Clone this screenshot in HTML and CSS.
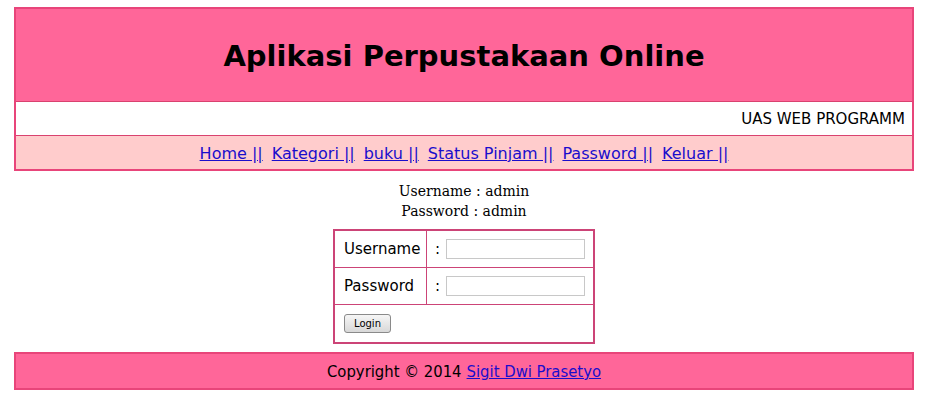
FILE: index.html
```html
<!DOCTYPE html>
<html>
<head>
<meta charset="utf-8">
<title>Aplikasi Perpustakaan Online</title>
<link rel="stylesheet" href="styles.css">
</head>
<body>
<div class="page">
  <div class="top">
    <div class="banner"><h1>Aplikasi Perpustakaan Online</h1></div>
    <div class="sub">UAS WEB PROGRAMM</div>
    <div class="nav">
      <a href="#">Home ||</a>
      <a href="#">Kategori ||</a>
      <a href="#">buku ||</a>
      <a href="#">Status Pinjam ||</a>
      <a href="#">Password ||</a>
      <a href="#">Keluar ||</a>
    </div>
  </div>
  <div class="hint">Username : admin<br>Password : admin</div>
  <form class="login">
    <div class="row">
      <div class="lbl">Username</div>
      <div class="val">: <input type="text" class="field"></div>
    </div>
    <div class="row">
      <div class="lbl">Password</div>
      <div class="val">: <input type="password" class="field"></div>
    </div>
    <div class="row last">
      <button type="button" class="btn">Login</button>
    </div>
  </form>
  <div class="footer">Copyright © 2014 <a href="#">Sigit Dwi Prasetyo</a></div>
</div>
</body>
</html>
```

FILE: styles.css
```css
html, body {
  margin: 0;
  padding: 0;
  background: #ffffff;
}
body {
  font-family: "DejaVu Sans", Verdana, sans-serif;
  color: #000;
}
.page {
  width: 900px;
  margin: 7px 0 0 14px;
  display: flex;
  flex-direction: column;
}
.top {
  border: 2px solid #e8457a;
  display: flex;
  flex-direction: column;
}
.banner {
  background: #ff6699;
  height: 92px;
  display: flex;
  align-items: center;
  justify-content: center;
  border-bottom: 1px solid #d9426f;
}
.banner h1 {
  margin: 0;
  font-size: 29px;
  font-weight: bold;
  position: relative;
  top: 1px;
}
.sub {
  height: 33px;
  display: flex;
  align-items: center;
  justify-content: flex-end;
  padding-right: 7px;
  font-size: 15px;
  border-bottom: 1px solid #d9426f;
}
.nav {
  background: #ffcccc;
  height: 32px;
  padding-top: 1px;
  display: flex;
  align-items: center;
  justify-content: center;
  gap: 9px;
  font-size: 16px;
}
.nav a, .footer a {
  color: #1a0dcc;
}
.hint {
  font-family: "DejaVu Serif", Georgia, serif;
  font-size: 14px;
  line-height: 20px;
  text-align: center;
  margin-top: 10px;
}
.login {
  align-self: center;
  width: 258px;
  margin: 8px 0 0 0;
  border: 2px solid #cc4477;
  display: flex;
  flex-direction: column;
  font-size: 15px;
}
.row {
  display: flex;
  height: 36px;
  border-bottom: 1px solid #cc4477;
}
.row.last {
  border-bottom: none;
  height: 37px;
  align-items: center;
  padding-left: 9px;
}
.lbl {
  width: 82px;
  padding-left: 9px;
  border-right: 1px solid #cc4477;
  display: flex;
  align-items: center;
}
.val {
  flex: 1;
  display: flex;
  align-items: center;
  padding-left: 8px;
  gap: 6px;
}
.field {
  width: 133px;
  height: 14px;
  border: 1px solid #c8c8c8;
  padding: 2px;
  margin: 0;
}
.btn {
  font-family: "DejaVu Sans", Tahoma, sans-serif;
  font-size: 10px;
  width: 47px;
  height: 19px;
  padding: 0;
  border: 1px solid #8a8a8a;
  border-radius: 3px;
  background: linear-gradient(#f6f6f6, #d8d8d8);
  color: #000;
}
.footer {
  margin-top: 8px;
  border: 2px solid #e8457a;
  background: #ff6699;
  height: 33px;
  padding-top: 1px;
  display: flex;
  align-items: center;
  justify-content: center;
  gap: 5px;
  font-size: 16.5px;
  font-stretch: condensed;
}
```
